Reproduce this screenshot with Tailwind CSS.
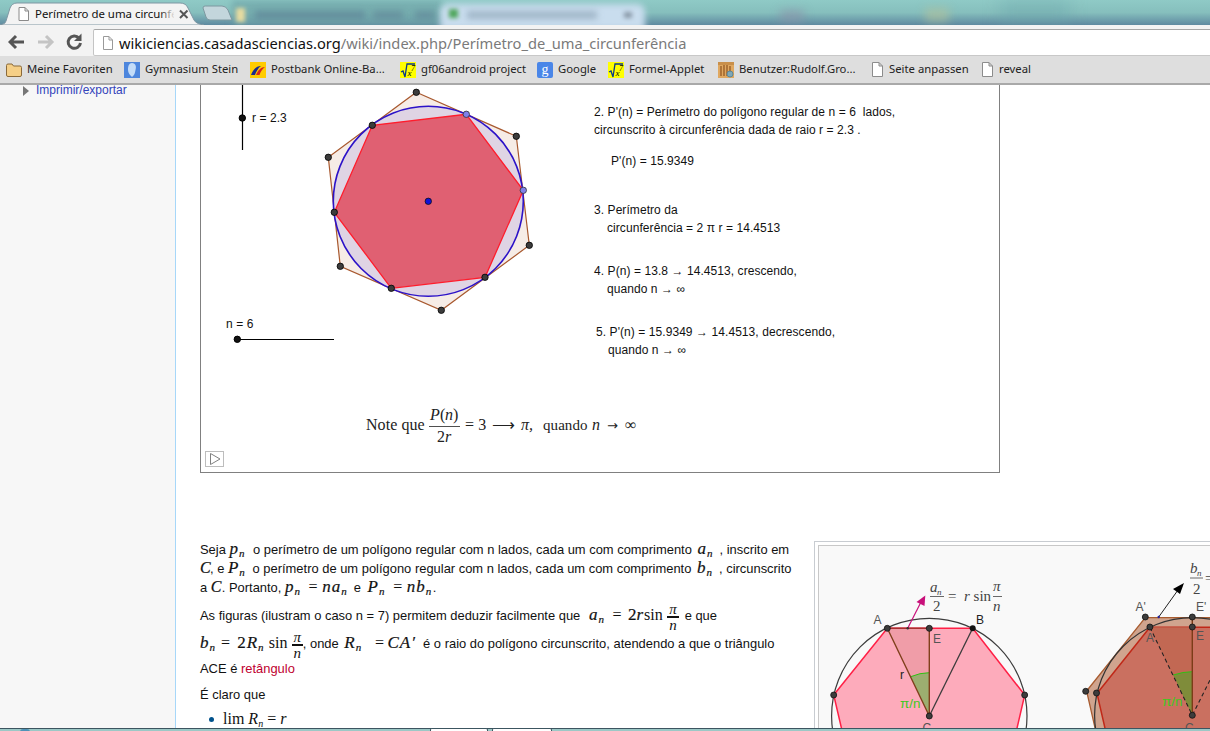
<!DOCTYPE html>
<html lang="pt">
<head>
<meta charset="utf-8">
<title>Perímetro de uma circunferência</title>
<script src="https://cdn.jsdelivr.net/npm/@tailwindcss/browser@4"></script>
</head>
<body class="bg-white">
<div class="relative w-[1210px] h-[731px] overflow-hidden flex flex-col font-['Liberation_Sans',sans-serif] text-[#111]">

  <!-- tab strip -->
  <header class="relative h-[25px] shrink-0 overflow-hidden bg-linear-to-b from-[#8fcac6] via-[#86bfbd] to-[#5f8aa0]">
    <div class="absolute left-[232px] top-0 h-[25px] w-[210px] bg-[#6fa5a8]/70 blur-[3px]"></div>
    <div class="absolute left-[440px] top-[4px] h-[26px] w-[205px] rounded-t-lg bg-[#c9ddee] blur-[3px]"></div>
    <div class="absolute left-[255px] top-[11px] h-[8px] w-[110px] bg-[#5d8296]/70 blur-[3px]"></div>
    <div class="absolute left-[373px] top-[11px] h-[8px] w-[30px] bg-[#5d8194]/60 blur-[3px]"></div>
    <div class="absolute left-[415px] top-[11px] h-[8px] w-[20px] bg-[#5d8194]/60 blur-[3px]"></div>
    <div class="absolute left-[236px] top-[8px] h-[14px] w-[9px] bg-[#e8dca0] blur-[2px]"></div>
    <div class="absolute left-[449px] top-[9px] h-[9px] w-[9px] bg-[#4fa65c] blur-[2px]"></div>
    <div class="absolute left-[467px] top-[11px] h-[8px] w-[130px] bg-[#8fa5b8]/70 blur-[3px]"></div>
    <div class="absolute left-[624px] top-[12px] h-[6px] w-[8px] bg-[#8a99a8] blur-[2px]"></div>
    <div class="absolute left-[780px] top-[10px] h-[12px] w-[24px] bg-[#8a8fa8]/60 blur-[5px]"></div>
    <div class="absolute left-[925px] top-[8px] h-[14px] w-[24px] bg-[#b4c29a]/60 blur-[5px]"></div>
    <div class="absolute left-[1000px] top-0 h-[25px] w-[70px] bg-[#6aa3a8]/40 blur-[8px]"></div>

    <svg class="absolute left-0 top-0" width="240" height="25" viewBox="0 0 240 25">
      <path d="M205 6 Q205 6 208 6 L222 6 Q226 6 228 10 L232 20 L210 20 Q207 20 206 17 L203 8 Q203 6 205 6 Z" fill="#c3d6dc" stroke="#7d98a0" stroke-width="1"/>
      <path d="M0 25 L3 24 Q5 24 6 21 L10 8 Q12 3 17 3 L180 3 Q186 3 188 8 L194 20 Q196 24 204 25 Z" fill="#f3f3f3" stroke="#7e97a3" stroke-width="1"/>
      <path d="M19 7.5 H25 L28.5 11 V20.5 H19 Z M25 7.5 V11 H28.5" fill="#fff" stroke="#8a8a8a" stroke-width="1"/>
      <path d="M180 10.5 L187.5 18 M187.5 10.5 L180 18" stroke="#555" stroke-width="2" fill="none"/>
    </svg>
    <div class="absolute left-[35px] top-[5px] h-[18px] w-[139px] overflow-hidden whitespace-nowrap font-['Noto_Sans',sans-serif] text-[11.4px] leading-[18px] text-[#111]">Perímetro de uma circunferência</div>
    <div class="absolute left-[160px] top-[5px] h-[18px] w-[15px] bg-linear-to-r from-[#f3f3f3]/0 to-[#f3f3f3]"></div>
  </header>

  <!-- toolbar -->
  <div class="relative flex h-[31px] shrink-0 items-start bg-[#f3f3f3] pt-[4px]">
    <div class="flex h-[26px] w-[93px] shrink-0 items-center pl-[8px]">
      <svg width="78" height="20" viewBox="0 0 78 20">
        <path d="M2 10 H16 M8 4 L2 10 L8 16" fill="none" stroke="#555" stroke-width="3"/>
        <path d="M30 10 H44 M38 4 L44 10 L38 16" fill="none" stroke="#c4c4c4" stroke-width="3"/>
        <path d="M71 6 A6.2 6.2 0 1 0 72.5 11" fill="none" stroke="#555" stroke-width="3"/>
        <path d="M73.5 1.5 V9 H66 Z" fill="#555"/>
      </svg>
    </div>
    <div class="flex h-[27px] flex-1 items-center rounded-l-[2px] border-t border-l border-b border-t-[#a6a6a6] border-l-[#c4c4c4] border-b-[#c8c8c8] bg-white pl-[9px]">
      <svg width="10" height="14" viewBox="0 0 10 14" class="shrink-0">
        <path d="M.5 .5 H6 L9.5 4 V13.5 H.5 Z M6 .5 V4 H9.5" fill="#fff" stroke="#9a9a9a"/>
      </svg>
      <span class="ml-[6px] whitespace-nowrap font-['Noto_Sans',sans-serif] text-[14.66px] leading-[24px] text-[#7a7a7a]"><span class="text-[#111]">wikiciencias.casadasciencias.org</span>/wiki/index.php/Perímetro_de_uma_circunferência</span>
    </div>
  </div>

  <!-- bookmarks -->
  <nav class="flex h-[29px] shrink-0 items-center border-b-2 border-b-[#a9a9a9] bg-[#dedede] pl-[6px] font-['Noto_Sans',sans-serif] text-[11.3px] text-[#222]">
    <div class="flex w-[118px] shrink-0 items-center gap-[5px] whitespace-nowrap">
      <svg width="16" height="16" viewBox="0 0 16 16" class="shrink-0"><path d="M.5 3.5 Q.5 2 2 2 H6 L7.5 4 H14 Q15.5 4 15.5 5.5 V13 Q15.5 14.5 14 14.5 H2 Q.5 14.5 .5 13 Z" fill="#f5cf87" stroke="#8a6a3a"/></svg>
      <span>Meine Favoriten</span>
    </div>
    <div class="flex w-[126px] shrink-0 items-center gap-[5px] whitespace-nowrap">
      <svg width="16" height="16" viewBox="0 0 16 16" class="shrink-0"><rect width="16" height="16" fill="#4d86dd"/><path d="M8 1 C12 1 12.5 5 11.5 8 C11 11 10.5 13 8 15 C6 13 4 11 4 8 C4 4 5 1 8 1 Z" fill="#c3dcf8"/></svg>
      <span>Gymnasium Stein</span>
    </div>
    <div class="flex w-[150px] shrink-0 items-center gap-[5px] whitespace-nowrap">
      <svg width="16" height="16" viewBox="0 0 16 16" class="shrink-0"><rect width="16" height="16" fill="#ffcc00"/><path d="M1 13 C3 7 7 4 11 4 C8 6 6 10 5 13 Z" fill="#1a2a8c"/><path d="M6 13 C8 8 11 5 15 5 C12 7 10.5 10 9.5 13 Z" fill="#d8261c"/></svg>
      <span>Postbank Online-Ba...</span>
    </div>
    <div class="flex w-[137px] shrink-0 items-center gap-[5px] whitespace-nowrap">
      <svg width="16" height="16" viewBox="0 0 16 16" class="shrink-0"><rect width="16" height="16" fill="#ffff00"/><path d="M1 10 L3 9 L5 15 L7 2 H15" fill="none" stroke="#0a3a8a" stroke-width="1.3"/><text x="7.5" y="14" font-size="9" font-style="italic" font-family="Liberation Serif" fill="#000">x</text><text x="11" y="9" font-size="8" font-style="italic" font-family="Liberation Serif" fill="#000">7</text></svg>
      <span>gf06android project</span>
    </div>
    <div class="flex w-[71px] shrink-0 items-center gap-[5px] whitespace-nowrap">
      <div class="flex h-[16px] w-[16px] shrink-0 items-center justify-center rounded-[2px] bg-[#4a86e8] font-['Liberation_Serif',serif] text-[14px] leading-none text-white">g</div>
      <span>Google</span>
    </div>
    <div class="flex w-[110px] shrink-0 items-center gap-[5px] whitespace-nowrap">
      <svg width="16" height="16" viewBox="0 0 16 16" class="shrink-0"><rect width="16" height="16" fill="#ffff00"/><path d="M1 10 L3 9 L5 15 L7 2 H15" fill="none" stroke="#0a3a8a" stroke-width="1.3"/><text x="7.5" y="14" font-size="9" font-style="italic" font-family="Liberation Serif" fill="#000">x</text><text x="11" y="9" font-size="8" font-style="italic" font-family="Liberation Serif" fill="#000">7</text></svg>
      <span>Formel-Applet</span>
    </div>
    <div class="flex w-[153px] shrink-0 items-center gap-[5px] whitespace-nowrap">
      <svg width="16" height="16" viewBox="0 0 16 16" class="shrink-0"><rect width="16" height="16" fill="#e0a860"/><rect y="0" width="16" height="3" fill="#c98f4a"/><path d="M3 4 V14 M6 3 V14 M9 3 V14 M12 4 V14" stroke="#9a5f28" stroke-width="1.4"/><circle cx="12" cy="12" r="3" fill="#7fa8b8" stroke="#5d8796"/></svg>
      <span>Benutzer:Rudolf.Gro...</span>
    </div>
    <div class="flex w-[110px] shrink-0 items-center gap-[5px] whitespace-nowrap">
      <svg width="13" height="15" viewBox="0 0 13 15" class="shrink-0"><path d="M1.5 .5 H8 L11.5 4 V14.5 H1.5 Z M8 .5 V4 H11.5" fill="#fff" stroke="#8c8c8c"/></svg>
      <span>Seite anpassen</span>
    </div>
    <div class="flex shrink-0 items-center gap-[5px] whitespace-nowrap">
      <svg width="13" height="15" viewBox="0 0 13 15" class="shrink-0"><path d="M1.5 .5 H8 L11.5 4 V14.5 H1.5 Z M8 .5 V4 H11.5" fill="#fff" stroke="#8c8c8c"/></svg>
      <span>reveal</span>
    </div>
  </nav>

  <!-- page -->
  <div class="flex min-h-0 flex-1">
    <aside class="h-full w-[176px] shrink-0 overflow-hidden border-r border-r-[#a7d7f9] bg-[#f7f7f7]">
      <div class="flex h-[11px] items-center pl-[23px]">
        <span class="h-0 w-0 border-y-[5px] border-l-[6px] border-y-transparent border-l-[#777]"></span>
        <span class="ml-[7px] whitespace-nowrap text-[12px] leading-[11px] text-[#3344bb]">Imprimir/exportar</span>
      </div>
    </aside>

    <main class="min-w-0 flex-1 pl-[24px]">
      <!-- applet -->
      <section class="relative h-[388px] w-[800px] border-x border-b border-x-[#808080] border-b-[#808080] bg-white">
        <svg class="absolute left-[-1px] top-0 tracking-[0.07px]" width="800" height="388" viewBox="200 85 800 388" font-family="Liberation Sans" font-size="12" fill="#111">
          <path d="M242.5 85 V150" stroke="#000" stroke-width="1.2"/>
          <circle cx="242.3" cy="118" r="3.2" fill="#111" stroke="#000"/>
          <path d="M237 339.5 H334" stroke="#000" stroke-width="1.2"/>
          <circle cx="237.3" cy="339.3" r="3.2" fill="#111" stroke="#000"/>
          <text x="252" y="122">r = 2.3</text>
          <text x="226" y="328">n = 6</text>

          <polygon points="416.3,92.3 516.3,136.3 529.3,245.3 441.3,310.3 340.3,266.3 328.3,157.3" fill="#f6ece6" stroke="#a8582e" stroke-width="1.2"/>
          <circle cx="428.3" cy="201.3" r="95" fill="#dfd4e4" stroke="#2c12c8" stroke-width="1.6"/>
          <polygon points="466.3,114.3 523.3,190.3 485,277.3 391.3,288.3 334.3,212.3 372.3,125.3" fill="#e06072" stroke="#ff1c2c" stroke-width="1.3"/>
          <g fill="#3c3c3c" stroke="#000" stroke-width=".8">
            <circle cx="416.3" cy="92.3" r="3.2"/><circle cx="516.3" cy="136.3" r="3.2"/><circle cx="529.3" cy="245.3" r="3.2"/>
            <circle cx="441.3" cy="310.3" r="3.2"/><circle cx="340.3" cy="266.3" r="3.2"/><circle cx="328.3" cy="157.3" r="3.2"/>
            <circle cx="485" cy="277.3" r="3.2"/><circle cx="391.3" cy="288.3" r="3.2"/><circle cx="334.3" cy="212.3" r="3.2"/><circle cx="372.3" cy="125.3" r="3.2"/>
          </g>
          <circle cx="466.3" cy="114.3" r="3.2" fill="#7f80ea" stroke="#333" stroke-width=".8"/>
          <circle cx="523.3" cy="190.3" r="3.2" fill="#7f80ea" stroke="#333" stroke-width=".8"/>
          <circle cx="428.3" cy="201.3" r="3.2" fill="#1010d8" stroke="#111" stroke-width=".8"/>

          <text x="594" y="116">2. P'(n) = Perímetro do polígono regular de n = 6&#160; lados,</text>
          <text x="594" y="134">circunscrito à circunferência dada de raio r = 2.3 .</text>
          <text x="611" y="165">P'(n) = 15.9349</text>
          <text x="594" y="214">3. Perímetro da</text>
          <text x="607" y="232">circunferência = 2 π r = 14.4513</text>
          <text x="594" y="275">4. P(n) = 13.8 → 14.4513, crescendo,</text>
          <text x="607" y="293">quando n → ∞</text>
          <text x="596" y="336">5. P'(n) = 15.9349 → 14.4513, decrescendo,</text>
          <text x="608" y="354">quando n → ∞</text>

          <g font-family="Liberation Serif" font-size="16" fill="#222">
            <text x="366" y="430">Note que</text>
            <text x="430" y="420" font-style="italic">P</text><text x="440" y="420">(</text><text x="445" y="420" font-style="italic">n</text><text x="453" y="420">)</text>
            <path d="M429 426.5 H460" stroke="#222" stroke-width=".8"/>
            <text x="437" y="442">2</text><text x="445" y="442" font-style="italic">r</text>
            <text x="465" y="430">= 3</text>
            <text x="492" y="430">⟶</text>
            <text x="521" y="430" font-style="italic">π,</text>
            <text x="543" y="430" font-size="15">quando</text>
            <text x="592" y="430" font-style="italic">n</text>
            <text x="607" y="430" font-family="DejaVu Sans" font-size="13">→</text>
            <text x="625" y="430">∞</text>
          </g>

          <rect x="205.5" y="451.5" width="18" height="15" fill="#fff" stroke="#bdbdbd"/>
          <path d="M210.5 453.5 L220 459 L210.5 464.5 Z" fill="#fff" stroke="#808080"/>
        </svg>
      </section>

      <!-- article -->
      <section class="mt-[68px] flex text-[12.93px] text-[#111]">
        <div class="mt-[-2px] w-[614px] shrink-0 whitespace-nowrap">
          <div class="h-[19px] leading-[19px]">Seja <i class="inline-block w-[20px] font-['Liberation_Serif',serif] text-[17px] tracking-[1px] [-webkit-text-stroke:0.2px_#111]">p<sub class="text-[11px]">n</sub></i> o perímetro de um polígono regular com n lados, cada um com comprimento <i class="ml-[2px] inline-block w-[22px] font-['Liberation_Serif',serif] text-[17px] tracking-[1px] [-webkit-text-stroke:0.2px_#111]">a<sub class="text-[11px]">n</sub></i>, inscrito em</div>
          <div class="h-[19px] leading-[19px]"><i class="inline-block w-[10px] font-['Liberation_Serif',serif] text-[16px] [-webkit-text-stroke:0.2px_#111]">C</i>, e <i class="inline-block w-[21px] font-['Liberation_Serif',serif] text-[17px] tracking-[1px] [-webkit-text-stroke:0.2px_#111]">P<sub class="text-[11px]">n</sub></i> o perímetro de um polígono regular com n lados, cada um com comprimento <i class="ml-[2px] inline-block w-[22px] font-['Liberation_Serif',serif] text-[17px] tracking-[1px] [-webkit-text-stroke:0.2px_#111]">b<sub class="text-[11px]">n</sub></i>, circunscrito</div>
          <div class="h-[21px] leading-[20px]">a <i class="inline-block w-[11px] font-['Liberation_Serif',serif] text-[16px] [-webkit-text-stroke:0.2px_#111]">C</i>. Portanto, <i class="inline-block w-[18px] font-['Liberation_Serif',serif] text-[17px] tracking-[1px] [-webkit-text-stroke:0.2px_#111]">p<sub class="text-[11px]">n</sub></i> <span class="ml-[2px] inline-block w-[8px] font-['Liberation_Serif',serif] text-[16px]">=</span> <i class="ml-[2px] inline-block w-[28px] font-['Liberation_Serif',serif] text-[17px] tracking-[1px] [-webkit-text-stroke:0.2px_#111]">na<sub class="text-[11px]">n</sub></i> e <i class="ml-[3px] inline-block w-[20px] font-['Liberation_Serif',serif] text-[17px] tracking-[1px] [-webkit-text-stroke:0.2px_#111]">P<sub class="text-[11px]">n</sub></i> <span class="ml-[2px] inline-block w-[8px] font-['Liberation_Serif',serif] text-[16px]">=</span> <i class="ml-[2px] inline-block w-[26px] font-['Liberation_Serif',serif] text-[17px] tracking-[1px] [-webkit-text-stroke:0.2px_#111]">nb<sub class="text-[11px]">n</sub></i>.</div>
          <div class="h-[32px] leading-[34px]">As figuras (ilustram o caso n = 7) permitem deduzir facilmente que <i class="ml-[5px] inline-block w-[18px] font-['Liberation_Serif',serif] text-[17px] tracking-[1px] [-webkit-text-stroke:0.2px_#111]">a<sub class="text-[11px]">n</sub></i> <span class="ml-[2px] inline-block w-[8px] font-['Liberation_Serif',serif] text-[16px]">=</span> <span class="ml-[4px] inline-block w-[14px] font-['Liberation_Serif',serif] text-[17px] [-webkit-text-stroke:0.2px_#111]">2<i>r</i></span><span class="ml-[2px] inline-block w-[20px] font-['Liberation_Serif',serif] text-[16px]">sin</span><span class="ml-[3px] inline-block w-[12px] text-center align-middle font-['Liberation_Serif',serif] text-[15px] leading-[14px]"><i class="block border-b-2 border-b-[#111]">π</i><i class="block">n</i></span> <span class="ml-[2px]">e que</span></div>
          <div class="h-[20px] leading-[20px]"><i class="inline-block w-[16px] font-['Liberation_Serif',serif] text-[17px] tracking-[1px] [-webkit-text-stroke:0.2px_#111]">b<sub class="text-[11px]">n</sub></i> <span class="inline-block w-[12px] text-center font-['Liberation_Serif',serif] text-[16px]">=</span> <span class="ml-[2px] inline-block w-[28px] font-['Liberation_Serif',serif] text-[17px] tracking-[1px] [-webkit-text-stroke:0.2px_#111]">2<i>R<sub class="text-[11px]">n</sub></i></span> <span class="inline-block w-[20px] font-['Liberation_Serif',serif] text-[16px]">sin</span><span class="ml-[3px] inline-block w-[11px] text-center align-middle font-['Liberation_Serif',serif] text-[15px] leading-[14px]"><i class="block border-b-2 border-b-[#111]">π</i><i class="block">n</i></span>, onde <i class="ml-[2px] inline-block w-[27px] font-['Liberation_Serif',serif] text-[17px] tracking-[1px] [-webkit-text-stroke:0.2px_#111]">R<sub class="text-[11px]">n</sub></i> <span class="inline-block w-[9px] font-['Liberation_Serif',serif] text-[16px]">=</span> <i class="inline-block w-[30px] font-['Liberation_Serif',serif] text-[17px] tracking-[1px] [-webkit-text-stroke:0.2px_#111]">CA′</i> <span class="ml-[2px]">é o raio do polígono circunscrito, atendendo a que o triângulo</span></div>
          <div class="mt-[5px] h-[28px] leading-[28px]">ACE é <a class="text-[#c00030]">retângulo</a></div>
          <div class="mt-[1px] h-[22px] leading-[22px]">É claro que</div>
          <ul class="pl-[9px]">
            <li class="flex h-[26px] items-start leading-[26px]">
              <span class="mt-[11px] h-[5px] w-[5px] rounded-full bg-[#00528c]"></span>
              <span class="ml-[9px] font-['Liberation_Serif',serif] text-[16px]">lim <i class="font-medium">R<sub class="text-[10px]">n</sub></i> = <i class="font-medium">r</i></span>
            </li>
          </ul>
        </div>

        <figure class="h-[200px] flex-1 border border-[#c8ccd1] bg-white p-[3px]">
          <div class="h-[196px] border border-[#c8c8c8] bg-[#f9f9f9]">
            <svg width="393" height="190" viewBox="819 546 393 190" font-family="Liberation Sans">
              <circle cx="929.3" cy="716" r="97.7" fill="none" stroke="#3c3c3c" stroke-width="1.2"/>
              <polygon points="887.3,628.3 972.7,628.3 1024.7,695 1005.7,777 852.9,777 833.7,695" fill="#fdabbb" stroke="#ff2046" stroke-width="1.5"/>
              <polygon points="887.3,628.3 929.3,628.3 929.3,716" fill="#f09da8"/>
              <path d="M929.3 716 L910.7 676.7 Q920 672.7 929.3 672.7 Z" fill="#9cae70"/>
              <path d="M910.7 676.7 Q920 672.7 929.3 672.7" fill="none" stroke="#30c014" stroke-width="1"/>
              <path d="M887.3 628.3 H929.3" stroke="#a83030" stroke-width="1.5"/>
              <path d="M887.3 628.3 L929.3 716 V628.3" fill="none" stroke="#80401c" stroke-width="1.4"/>
              <path d="M972.7 628.3 L929.3 716" stroke="#3c3c3c" stroke-width="1.3"/>
              <path d="M907.7 628.3 L921 602" stroke="#c8107a" stroke-width="1.2"/>
              <path d="M925.3 595.5 L924.5 606 L916.5 602 Z" fill="#c8107a"/>
              <circle cx="907.7" cy="628.3" r="1.2" fill="#333"/>
              <g fill="#3c3c3c" stroke="#111" stroke-width=".8">
                <circle cx="887.3" cy="628.3" r="3"/><circle cx="929.3" cy="628.3" r="3"/><circle cx="929.3" cy="716" r="3"/>
                <circle cx="833.7" cy="695" r="3"/><circle cx="1024.7" cy="695" r="3"/>
              </g>
              <circle cx="972.7" cy="628.3" r="3" fill="#111"/>
              <g font-size="12" fill="#555">
                <text x="873.5" y="623.5">A</text><text x="976" y="623.5" fill="#222">B</text><text x="933" y="642.5">E</text>
                <text x="900" y="679" fill="#222">r</text><text x="922.5" y="732">C</text>
              </g>
              <text x="900" y="707.5" font-size="13.5" fill="#40c820">π/n</text>
              <g font-family="Liberation Serif" font-size="15" fill="#444">
                <text x="930" y="592" font-style="italic">a</text><text x="937" y="595" font-size="9" font-style="italic">n</text>
                <path d="M930 596.5 H944" stroke="#444" stroke-width=".8"/>
                <text x="933" y="611">2</text>
                <text x="948" y="601">=</text>
                <text x="964" y="601"><tspan font-style="italic">r</tspan> sin</text>
                <text x="993" y="591" font-style="italic">π</text>
                <path d="M993 596.5 H1002" stroke="#444" stroke-width=".8"/>
                <text x="993" y="611" font-style="italic">n</text>
              </g>

              <polygon points="1145.3,617.6 1239.3,617.6 1300,691 1277,783 1107.6,783 1086.6,691" fill="#d0a48e" stroke="#a85c30" stroke-width="1.3"/>
              <polygon points="1149.9,627.3 1234.7,627.3 1287,693.5 1268,776 1116,776 1097,693.5" fill="#ca7060" stroke="#c02818" stroke-width="1.5"/>
              <polygon points="1149.9,627.3 1192.3,627.3 1192.3,715.3" fill="#c26853"/>
              <circle cx="1192.3" cy="715.3" r="97.7" fill="none" stroke="#333" stroke-width="1.2"/>
              <path d="M1192.3 715.3 L1173.3 675 Q1183 671.7 1192.3 671.7 Z" fill="#7f8c3a"/>
              <path d="M1173.3 675 Q1183 671.7 1192.3 671.7" fill="none" stroke="#30c014" stroke-width="1"/>
              <path d="M1192.3 617.6 V715.3" stroke="#7c3c18" stroke-width="1.4"/>
              <path d="M1149.9 627.3 L1192.3 715.3 L1210 680" fill="none" stroke="#222" stroke-width="1.1" stroke-dasharray="4 3"/>
              <path d="M1158.7 617 L1178 590" stroke="#222" stroke-width="1"/>
              <path d="M1184 583 L1180 594 L1173 589 Z" fill="#000"/>
              <circle cx="1158.7" cy="617" r="1.2" fill="#2020a0"/>
              <g fill="#3c3c3c" stroke="#111" stroke-width=".8">
                <circle cx="1145.3" cy="617" r="3"/><circle cx="1192.3" cy="617" r="3"/><circle cx="1149.9" cy="627" r="3"/>
                <circle cx="1192.3" cy="627" r="3"/><circle cx="1096.5" cy="693" r="3"/><circle cx="1085.7" cy="691.3" r="3"/>
                <circle cx="1192.3" cy="715.3" r="3"/>
              </g>
              <g font-size="12" fill="#555">
                <text x="1135.5" y="611">A'</text><text x="1196" y="611">E'</text><text x="1146" y="642">A</text><text x="1196" y="640">E</text><text x="1185" y="732">C</text>
              </g>
              <text x="1162" y="705.5" font-size="13.5" fill="#40c820">π/n</text>
              <g font-family="Liberation Serif" font-size="15" fill="#444">
                <text x="1190" y="573" font-style="italic">b</text><text x="1197" y="576" font-size="9" font-style="italic">n</text>
                <path d="M1190 578 H1203" stroke="#444" stroke-width=".8"/>
                <text x="1193" y="594">2</text>
                <text x="1205" y="583">=</text>
              </g>
            </svg>
          </div>
        </figure>
      </section>
    </main>
  </div>

  <!-- taskbar sliver over the page -->
  <div class="absolute inset-x-0 bottom-0 h-[3px] border-t border-t-[#3c5560] bg-[#9cc8c6]">
    <div class="absolute left-[20px] top-0 h-[3px] w-[10px] rounded-t-full bg-[#4f93b8]"></div>
    <div class="absolute left-[430px] top-[-1px] h-[3px] w-[58px] rounded-t-[2px] border-x border-t border-[#3c5560] bg-white"></div>
    <div class="absolute left-[492px] top-[-1px] h-[3px] w-[60px] rounded-t-[2px] border-x border-t border-[#3c5560] bg-white"></div>
  </div>
</div>
</body>
</html>
